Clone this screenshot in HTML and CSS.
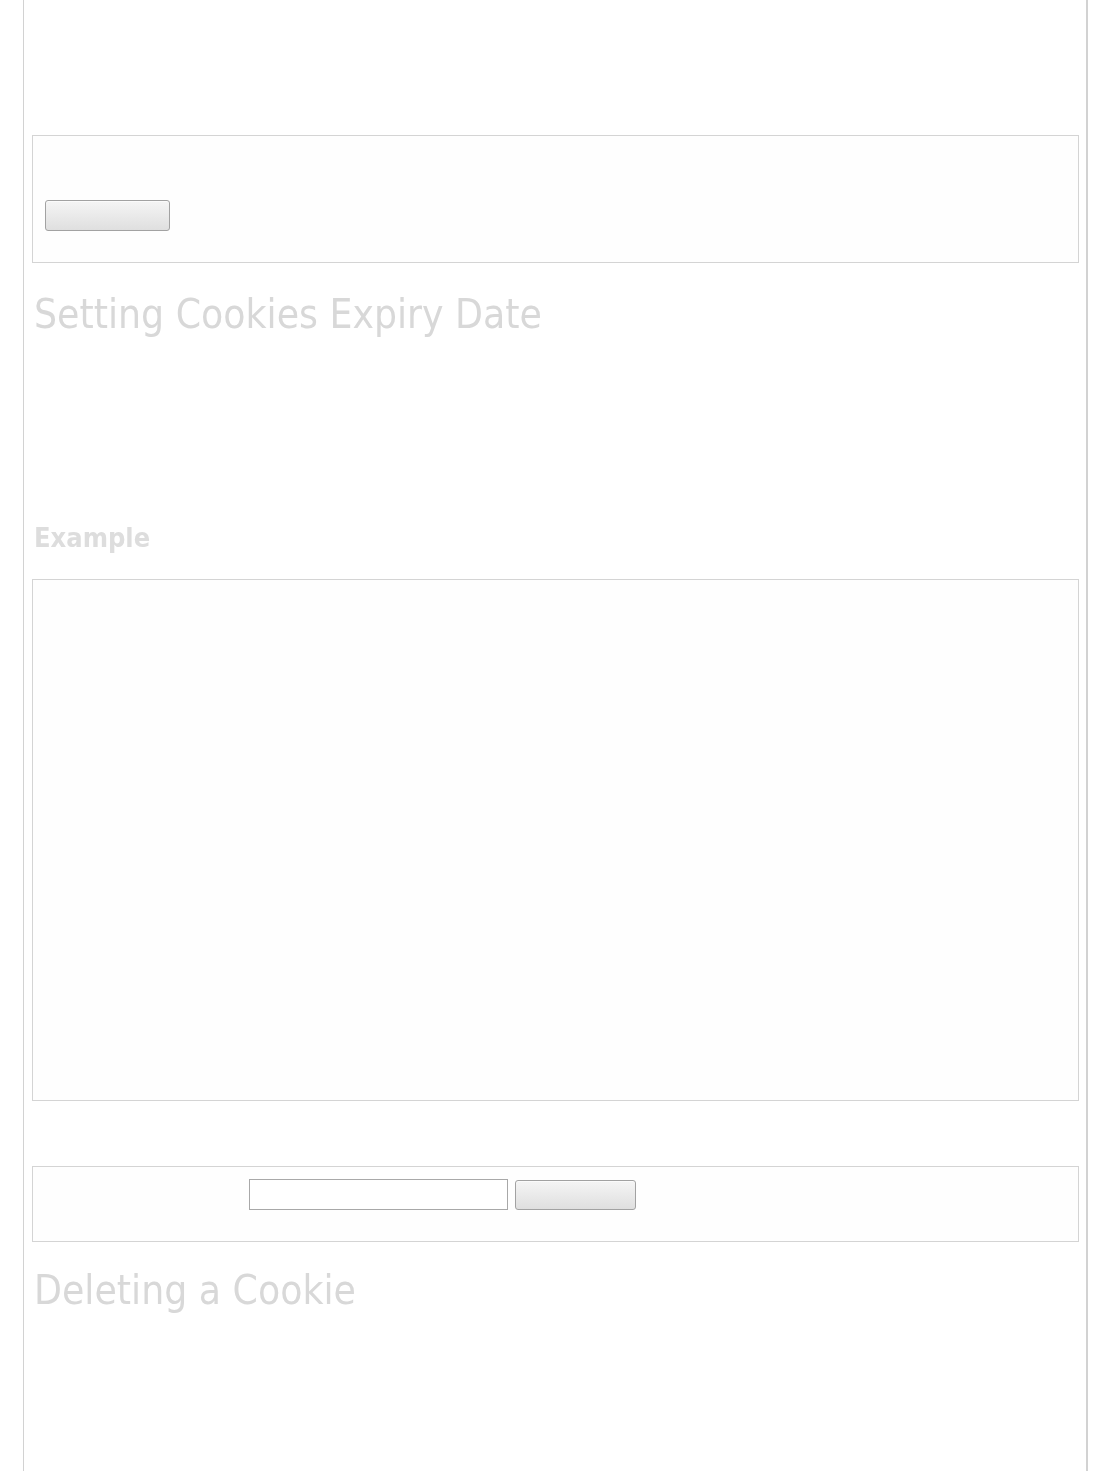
FILE: index.html
```html
<!DOCTYPE html>
<html lang="en">
<head>
<meta charset="utf-8">
<title>Setting Cookies Expiry Date</title>
<link rel="stylesheet" href="styles.css">
</head>
<body>
<div class="page">
  <div class="demo demo-first">
    <button class="btn" type="button"></button>
  </div>
  <h1 class="title title-first">Setting Cookies Expiry Date</h1>
  <div class="spacer spacer-text"></div>
  <h2 class="subtitle">Example</h2>
  <div class="code-box"></div>
  <div class="demo demo-form">
    <div class="form-row">
      <input class="field" type="text">
      <button class="btn btn-small" type="button"></button>
    </div>
  </div>
  <h1 class="title title-second">Deleting a Cookie</h1>
</div>
</body>
</html>
```

FILE: styles.css
```css
html, body {
  margin: 0;
  padding: 0;
  background: #ffffff;
}

body {
  font-family: "DejaVu Sans Condensed", "DejaVu Sans", sans-serif;
}

.page {
  box-sizing: border-box;
  margin-left: 23px;
  width: 1065px;
  min-height: 1471px;
  border-left: 1px solid #d2d2d2;
  border-right: 2px solid #d2d2d2;
  padding: 135px 7px 0 8px;
}

.demo {
  box-sizing: border-box;
  border: 1px solid #d4d4d4;
  background: #fefefe;
}

.demo-first {
  height: 128px;
  padding: 64px 12px 31px;
}

.btn {
  display: block;
  box-sizing: border-box;
  width: 125px;
  height: 31px;
  margin: 0;
  padding: 0;
  border: 1px solid #a2a2a2;
  border-radius: 3px;
  background: linear-gradient(#f5f5f5, #dfdfdf);
  box-shadow: inset 0 1px 0 #fbfbfb;
}

.title {
  margin: 0;
  padding-left: 2px;
  font-size: 40.4px;
  line-height: 48px;
  font-weight: normal;
  color: #d8d8d8;
  filter: blur(0.6px);
}

.title-first {
  margin-top: 27px;
}

.spacer-text {
  height: 184px;
}

.subtitle {
  margin: 0;
  padding-left: 2px;
  font-size: 27px;
  line-height: 32px;
  font-weight: bold;
  color: #dddddd;
  filter: blur(0.7px);
}

.code-box {
  box-sizing: border-box;
  margin-top: 25px;
  height: 522px;
  border: 1px solid #d4d4d4;
  background: #fefefe;
}

.demo-form {
  margin-top: 65px;
  height: 76px;
  padding: 12px 12px 0 216px;
}

.form-row {
  display: flex;
  align-items: flex-start;
  gap: 7px;
}

.field {
  box-sizing: border-box;
  width: 259px;
  height: 31px;
  margin: 0;
  padding: 0 4px;
  border: 1px solid #a8a8a8;
  background: #ffffff;
  outline: none;
}

.btn-small {
  width: 121px;
  height: 30px;
  margin-top: 1px;
}

.title-second {
  margin-top: 24px;
}
```
